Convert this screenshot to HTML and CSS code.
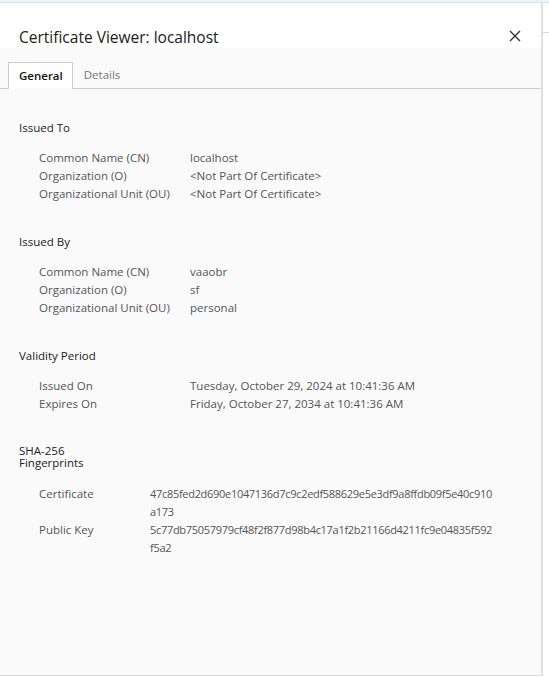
FILE: index.html
```html
<!DOCTYPE html>
<html>
<head>
<meta charset="utf-8">
<link rel="stylesheet" href="styles.css">
</head>
<body>
<div class="topstrip"></div>
<div class="stage">
  <div class="dialog">
    <div class="header">
      <div class="title">Certificate Viewer: localhost</div>
      <svg class="close" width="12" height="12" viewBox="0 0 12 12"><path d="M1 1 L11 11 M11 1 L1 11" stroke="#333" stroke-width="1.4" fill="none"/></svg>
    </div>
    <div class="body">
      <div class="tabs">
        <div class="tab active">General</div>
        <div class="tab">Details</div>
      </div>
      <div class="content">
        <div class="section">
          <div class="stitle">Issued To</div>
          <div class="rows">
            <div class="label">Common Name (CN)</div><div class="value">localhost</div>
            <div class="label">Organization (O)</div><div class="value">&lt;Not Part Of Certificate&gt;</div>
            <div class="label">Organizational Unit (OU)</div><div class="value">&lt;Not Part Of Certificate&gt;</div>
          </div>
        </div>
        <div class="section">
          <div class="stitle">Issued By</div>
          <div class="rows">
            <div class="label">Common Name (CN)</div><div class="value">vaaobr</div>
            <div class="label">Organization (O)</div><div class="value">sf</div>
            <div class="label">Organizational Unit (OU)</div><div class="value">personal</div>
          </div>
        </div>
        <div class="section">
          <div class="stitle">Validity Period</div>
          <div class="rows">
            <div class="label">Issued On</div><div class="value">Tuesday, October 29, 2024 at 10:41:36 AM</div>
            <div class="label">Expires On</div><div class="value">Friday, October 27, 2034 at 10:41:36 AM</div>
          </div>
        </div>
        <div class="section">
          <div class="stitle narrow">SHA-256 Fingerprints</div>
          <div class="rows fp">
            <div class="label">Certificate</div><div class="value hash">47c85fed2d690e1047136d7c9c2edf588629e5e3df9a8ffdb09f5e40c910<wbr>a173</div>
            <div class="label">Public Key</div><div class="value hash">5c77db75057979cf48f2f877d98b4c17a1f2b21166d4211fc9e04835f592<wbr>f5a2</div>
          </div>
        </div>
      </div>
    </div>
  </div>
  <div class="behind"><div class="behindline"></div></div>
</div>
</body>
</html>
```
FILE: styles.css
```css
html, body {
  margin: 0;
  padding: 0;
  background: #ffffff;
  font-family: "Open Sans", "Noto Sans", sans-serif;
}
.topstrip {
  height: 2px;
  background: #eef2f9;
  border-bottom: 1px solid #dfe3ea;
}
.stage {
  display: flex;
  height: 674px;
}
.dialog {
  width: 543px;
  height: 673px;
  border-right: 2px solid #e0e0e0;
  border-bottom: 1px solid #dcdcdc;
  display: flex;
  flex-direction: column;
  box-sizing: border-box;
}
.behind {
  flex: 1;
  padding-top: 29px;
}
.behindline {
  height: 1px;
  background: #d8d8d8;
}
.header {
  height: 45px;
  background: #ffffff;
  display: flex;
  align-items: flex-end;
  justify-content: space-between;
  padding: 0 20px 0 19px;
  box-sizing: border-box;
}
.title {
  font-size: 15.5px;
  color: #202020;
  line-height: 20px;
  padding-bottom: 1px;
}
.close {
  margin-bottom: 6px;
}
.body {
  flex: 1;
  background: #fafafa;
}
.tabs {
  margin-top: 14px;
  display: flex;
  align-items: flex-end;
  border-bottom: 1px solid #cccccc;
  height: 26px;
  padding-left: 8px;
}
.tab {
  font-size: 11.5px;
  color: #777;
  height: 26px;
  line-height: 26px;
  padding: 0 11px;
  box-sizing: border-box;
}
.tab.active {
  background: #ffffff;
  border: 1px solid #cccccc;
  border-bottom: none;
  height: 27px;
  margin-bottom: -1px;
  color: #111;
  font-weight: 600;
  padding: 0 9px 0 10px;
  line-height: 25px;
}
.content {
  padding: 30px 19px 0 19px;
  font-size: 11.5px;
  line-height: 18px;
}
.section {
  margin-bottom: 30px;
}
.stitle {
  color: #222;
  line-height: 18px;
  margin-bottom: 12px;
}
.stitle.narrow {
  width: 70px;
  line-height: 12px;
  padding-top: 2px;
  margin-bottom: 16px;
}
.rows {
  display: grid;
  grid-template-columns: 151px auto;
  padding-left: 20px;
  color: #555;
}
.rows.fp {
  grid-template-columns: 111px 358px;
}
.hash {
  font-size: 11px;
  letter-spacing: -0.3px;
}
```
